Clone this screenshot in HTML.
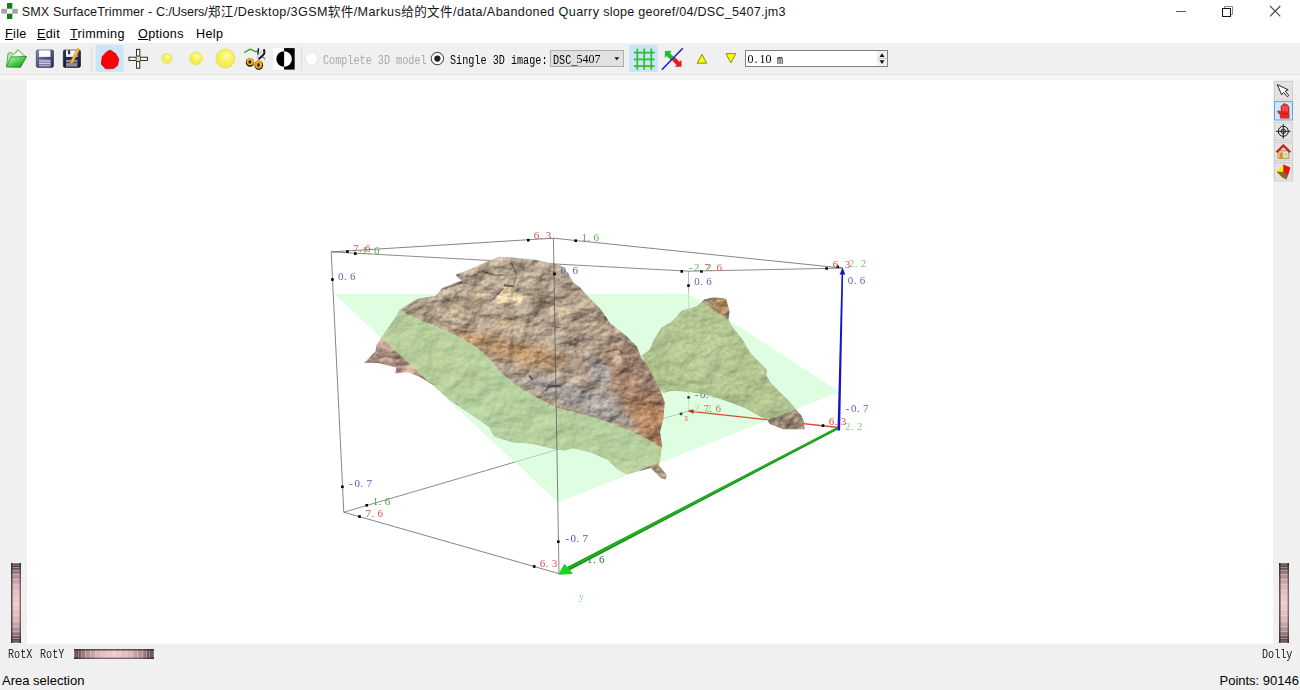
<!DOCTYPE html>
<html lang="en">
<head>
<meta charset="utf-8">
<title>SMX SurfaceTrimmer</title>
<style>
html,body{margin:0;padding:0;}
body{width:1300px;height:690px;overflow:hidden;background:#f0f0f0;position:relative;
  font-family:"Liberation Sans","Noto Sans CJK SC",sans-serif;color:#000;}
.abs{position:absolute;}
#titlebar{left:0;top:0;width:1300px;height:22px;background:#fff;}
#title{left:21.7px;top:4px;font-size:12.6px;line-height:16px;white-space:nowrap;color:#161616;letter-spacing:0.24px;}
#menubar{left:0;top:22px;width:1300px;height:21px;background:#fff;}
.mi{top:26px;font-size:12.6px;line-height:16px;white-space:nowrap;letter-spacing:.35px;}
.mi u{text-decoration:underline;text-underline-offset:1px;}
#toolbar{left:0;top:43px;width:1300px;height:31px;background:#f0f0f0;}
#tbline{left:0;top:74px;width:1300px;height:1px;background:#e3e3e3;}
#tbline2{left:0;top:75px;width:1300px;height:5px;background:#f6f6f6;}
#viewport{left:27px;top:80px;width:1246px;height:564px;background:#fff;}
.mono{font-family:"Liberation Mono","Noto Sans CJK SC",monospace;font-size:12.2px;line-height:14px;white-space:nowrap;transform:scaleX(.833);transform-origin:0 0;}
.sep{width:1px;height:24px;top:47px;background:#d0d0d0;}
.status{font-size:13px;line-height:16px;top:673px;white-space:nowrap;}
#scene{left:0;top:0;}
</style>
</head>
<body>
<div id="titlebar" class="abs"></div>
<div id="menubar" class="abs"></div>
<div id="toolbar" class="abs"></div>
<div id="tbline" class="abs"></div>
<div id="tbline2" class="abs"></div>
<div id="viewport" class="abs"></div>

<!-- title -->
<div id="title" class="abs"><span style="letter-spacing:.12px">SMX SurfaceTrimmer - </span><span style="letter-spacing:-.08px">C:/Users/</span><span style="letter-spacing:.5px">郑江</span><span style="letter-spacing:.38px">/Desktop/3GSM软件/Markus给的文件/data/Abandoned Quarry </span><span>slope georef/04/DSC_5407.jm3</span></div>

<!-- menu -->
<div class="abs mi" id="m1" style="left:5px"><u>F</u>ile</div>
<div class="abs mi" id="m2" style="left:37px"><u>E</u>dit</div>
<div class="abs mi" id="m3" style="left:70px"><u>T</u>rimming</div>
<div class="abs mi" id="m4" style="left:138px"><u>O</u>ptions</div>
<div class="abs mi" id="m5" style="left:196px">Help</div>

<!-- toolbar text -->
<div class="abs mono" id="t1" style="left:323.2px;top:53.7px;color:#a8a8a8">Complete 3D model</div>
<div class="abs mono" id="t2" style="left:449.6px;top:53.7px;color:#000">Single 3D image:</div>
<div class="abs" id="combo" style="left:550px;top:50px;width:72px;height:15px;background:#e1e1e1;border:1px solid #adadad;"></div>
<div class="abs mono" id="t3" style="left:552.5px;top:53.7px;color:#000">DSC_</div>
<div class="abs" id="spin" style="left:745px;top:50px;width:141px;height:15px;background:#fff;border:1px solid #808080;"></div>
<div class="abs mono" id="t4" style="left:777.3px;top:53.7px;color:#000">m</div>

<!-- bottom labels -->
<div class="abs mono" id="b1" style="left:7.6px;top:648.3px;color:#222">RotX</div>
<div class="abs mono" id="b3" style="left:40.3px;top:648.3px;color:#222">RotY</div>
<div class="abs mono" id="b2" style="left:1262px;top:648.3px;color:#222">Dolly</div>
<div class="abs status" id="s1" style="left:2px">Area selection</div>
<div class="abs status" id="s2" style="right:1px">Points: 90146</div>

<svg class="abs" id="scene" width="1300" height="690" viewBox="0 0 1300 690">
<defs>
<clipPath id="cpPlane"><polygon points="334.2,294.1 688.5,293.8 839.6,392.0 558.0,502.4"/></clipPath>
<clipPath id="cpR1"><polygon points="499.6,256.7 512.4,257.4 535.6,259.7 551.8,263.2 560.0,264.6 567.5,272.5 573.8,282.9 580.0,287.4 589.3,297.8 600.9,309.4 610.2,323.3 626.4,336.1 636.8,346.5 641.5,358.1 649.6,367.4 658.9,386.0 664.7,402.2 663.5,418.4 660.0,432.0 662.4,445.8 661.2,450.5 658.9,465.5 666.5,474.8 665.9,479.4 661.2,478.3 650.8,467.9 642.7,470.2 626.4,474.1 617.2,469.0 607.9,459.7 591.6,452.8 573.1,448.1 563.8,450.5 549.9,448.1 531.3,443.5 512.8,442.3 494.2,436.5 489.6,427.3 473.3,415.7 450.2,400.6 433.9,385.5 419.6,376.8 408.0,372.2 395.2,373.4 396.4,367.6 377.8,362.9 363.9,362.9 375.5,351.3 376.7,344.4 382.5,336.3 396.4,316.5 399.9,309.6 417.3,299.1 435.8,295.7 442.8,287.5 461.3,280.6 455.5,274.8 470.6,269.0 485.7,262.0"/></clipPath>
<clipPath id="cpR2"><polygon points="719.2,297.8 726.1,299.0 729.6,311.7 728.4,319.9 733.1,328.0 742.4,339.6 750.8,353.8 760.0,363.1 766.9,370.0 766.2,375.4 770.8,383.1 778.5,390.8 790.8,403.1 796.9,410.8 801.5,415.4 803.8,421.5 804.6,429.2 783.1,429.2 769.2,423.8 767.7,420.0 758.5,415.4 747.7,409.2 732.3,403.1 716.9,397.7 701.5,393.8 686.2,391.5 670.8,390.8 663.1,393.1 655.0,380.0 641.5,355.8 649.6,350.0 654.2,339.6 661.2,328.0 672.8,321.0 681.7,310.8 697.4,306.3 704.2,299.6 712.0,297.4"/></clipPath>
<clipPath id="cpR1up"><polygon points="399.9,310.7 417.3,318.5 440.0,328.0 458.0,336.2 472.0,344.0 485.8,354.8 494.0,364.0 502.0,373.3 512.0,381.5 522.9,389.5 539.1,398.8 557.6,408.1 585.4,415.0 608.6,422.0 631.8,431.3 650.3,440.5 661.9,447.5 700.0,448.0 700.0,230.0 340.0,230.0 340.0,310.0"/></clipPath>
<filter id="fBlur4" x="-20%" y="-20%" width="140%" height="140%"><feGaussianBlur stdDeviation="4"/></filter>
<filter id="fBlur2" x="-20%" y="-20%" width="140%" height="140%"><feGaussianBlur stdDeviation="2"/></filter>
<filter id="fBlur1" x="-20%" y="-20%" width="140%" height="140%"><feGaussianBlur stdDeviation=".9"/></filter>
<filter id="fBlurH" x="-20%" y="-20%" width="140%" height="140%"><feGaussianBlur stdDeviation=".7"/></filter>
<filter id="fNoise" x="0" y="0" width="100%" height="100%">
<feTurbulence type="fractalNoise" baseFrequency="0.28 0.34" numOctaves="3" seed="7" result="n"/>
<feColorMatrix in="n" type="matrix" values="0 0 0 0 0  0 0 0 0 0  0 0 0 0 0  1.6 0.9 0 0 -0.95" result="a"/>
<feFlood flood-color="#3a2c22"/><feComposite in2="a" operator="in"/>
</filter>
<filter id="fNoiseL" x="0" y="0" width="100%" height="100%">
<feTurbulence type="fractalNoise" baseFrequency="0.2 0.26" numOctaves="3" seed="23" result="n"/>
<feColorMatrix in="n" type="matrix" values="0 0 0 0 0  0 0 0 0 0  0 0 0 0 0  0.8 1.8 0 0 -1.05" result="a"/>
<feFlood flood-color="#e8d8bc"/><feComposite in2="a" operator="in"/>
</filter>
<filter id="fBump" filterUnits="userSpaceOnUse" x="350" y="245" width="330" height="245" color-interpolation-filters="sRGB">
<feTurbulence type="fractalNoise" baseFrequency="0.04 0.05" numOctaves="4" seed="11" result="t"/>
<feDiffuseLighting in="t" surfaceScale="3.6" diffuseConstant="1" lighting-color="#ffffff" result="l"><feDistantLight azimuth="235" elevation="52"/></feDiffuseLighting>
<feComposite in="SourceGraphic" in2="l" operator="arithmetic" k1="1.34" k2="0" k3="0" k4="0"/>
</filter>
<filter id="fBump2" filterUnits="userSpaceOnUse" x="630" y="290" width="190" height="150" color-interpolation-filters="sRGB">
<feTurbulence type="fractalNoise" baseFrequency="0.05 0.06" numOctaves="4" seed="5" result="t"/>
<feDiffuseLighting in="t" surfaceScale="3" diffuseConstant="1" lighting-color="#ffffff" result="l"><feDistantLight azimuth="235" elevation="55"/></feDiffuseLighting>
<feComposite in="SourceGraphic" in2="l" operator="arithmetic" k1="1.25" k2="0" k3="0" k4="0"/>
</filter>
</defs>
<g stroke="#5a5a5a" stroke-width=".7" fill="none">
<path d="M688.5 271.2L688.5 293.4" stroke="#9aa0a4"/>
<path d="M688.5 293.4L688.6 411.1" stroke="#a4aca4"/>
<path d="M343.8 512.2L688.6 411.1"/>
<path d="M331.2 251.9L688.5 271.2L842.6 268.1"/>
</g>
<polygon points="334.2,294.1 688.5,293.8 839.6,392.0 558.0,502.4" fill="rgb(202,252,203)" fill-opacity="0.6"/>
<path d="M688.6 411.1L838.8 427.5" stroke="#dc4a30" stroke-width="1.3" fill="none"/>
<path d="M687.6 411.1L693.6 409.5L693.6 413.70000000000005Z" fill="#c03020"/>
<text x="694.8 700 706 712" y="397.8" font-family="'Liberation Serif',serif" font-size="11px" fill="#5a6a9a">-0.7</text>
<g clip-path="url(#cpR2)"><g filter="url(#fBump2)">
<polygon points="719.2,297.8 726.1,299.0 729.6,311.7 728.4,319.9 733.1,328.0 742.4,339.6 750.8,353.8 760.0,363.1 766.9,370.0 766.2,375.4 770.8,383.1 778.5,390.8 790.8,403.1 796.9,410.8 801.5,415.4 803.8,421.5 804.6,429.2 783.1,429.2 769.2,423.8 767.7,420.0 758.5,415.4 747.7,409.2 732.3,403.1 716.9,397.7 701.5,393.8 686.2,391.5 670.8,390.8 663.1,393.1 655.0,380.0 641.5,355.8 649.6,350.0 654.2,339.6 661.2,328.0 672.8,321.0 681.7,310.8 697.4,306.3 704.2,299.6 712.0,297.4" fill="#9a947a"/>
<g filter="url(#fBlur4)">
<ellipse cx="722" cy="305" rx="11" ry="8" fill="#b07c4a"/>
<ellipse cx="700" cy="350" rx="35" ry="28" fill="#a8a086"/>
<ellipse cx="750" cy="385" rx="25" ry="14" fill="#989074" transform="rotate(40 750 385)"/>
<ellipse cx="790" cy="423" rx="16" ry="7" fill="#92786a"/>
<ellipse cx="665" cy="372" rx="12" ry="16" fill="#908a70"/>
</g>
<rect x="630" y="290" width="190" height="150" filter="url(#fNoise)" opacity=".25"/>
<rect x="630" y="290" width="190" height="150" filter="url(#fNoiseL)" opacity=".4"/>
</g></g>
<g clip-path="url(#cpR1)"><g filter="url(#fBump)">
<polygon points="499.6,256.7 512.4,257.4 535.6,259.7 551.8,263.2 560.0,264.6 567.5,272.5 573.8,282.9 580.0,287.4 589.3,297.8 600.9,309.4 610.2,323.3 626.4,336.1 636.8,346.5 641.5,358.1 649.6,367.4 658.9,386.0 664.7,402.2 663.5,418.4 660.0,432.0 662.4,445.8 661.2,450.5 658.9,465.5 666.5,474.8 665.9,479.4 661.2,478.3 650.8,467.9 642.7,470.2 626.4,474.1 617.2,469.0 607.9,459.7 591.6,452.8 573.1,448.1 563.8,450.5 549.9,448.1 531.3,443.5 512.8,442.3 494.2,436.5 489.6,427.3 473.3,415.7 450.2,400.6 433.9,385.5 419.6,376.8 408.0,372.2 395.2,373.4 396.4,367.6 377.8,362.9 363.9,362.9 375.5,351.3 376.7,344.4 382.5,336.3 396.4,316.5 399.9,309.6 417.3,299.1 435.8,295.7 442.8,287.5 461.3,280.6 455.5,274.8 470.6,269.0 485.7,262.0" fill="#a89888"/>
<g filter="url(#fBlur4)">
<polygon points="455,250 560,250 585,290 565,315 440,308 425,290" fill="#b0a392"/>
<polygon points="395,300 450,296 520,310 565,332 545,348 470,336 420,322" fill="#ae9d8a"/>
<polygon points="440,326 480,333 540,346 568,359 560,370 530,367 497,357 468,345" fill="#ae8a66"/>
<polygon points="560,272 600,305 640,345 668,400 650,420 600,400 572,360 558,320" fill="#a08e7e"/>
<polygon points="512,376 575,383 625,402 640,428 600,420 545,404" fill="#9c9896"/>
<polygon points="600,345 640,350 668,400 672,440 640,420 610,385" fill="#9c7c68"/>
<polygon points="618,402 655,392 674,425 668,470 645,442" fill="#a87c5a"/>
<polygon points="356,368 380,335 400,312 440,330 490,370 470,400 420,376" fill="#aa8c72"/>
<polygon points="355,370 376,334 400,356 426,382 400,380" fill="#b4968a"/>
<polygon points="470,390 520,385 600,420 660,450 668,482 600,470 520,450" fill="#a08e78"/>
<polygon points="575,296 602,310 614,345 590,340" fill="#ac9a88"/>
<polygon points="628,345 645,362 658,392 648,392 632,366" fill="#7e6a5e"/>
</g>
<g filter="url(#fBlur2)">
<ellipse cx="466" cy="304" rx="22" ry="9" fill="#92826f" transform="rotate(-12 466 304)"/>
<ellipse cx="540" cy="300" rx="12" ry="16" fill="#948472"/>
<ellipse cx="525" cy="268" rx="22" ry="6" fill="#9c8e7e"/>
<ellipse cx="600" cy="372" rx="10" ry="16" fill="#989492" transform="rotate(-30 600 372)"/>
<ellipse cx="560" cy="392" rx="22" ry="7" fill="#969292" transform="rotate(25 560 392)"/>
<ellipse cx="520" cy="352" rx="26" ry="5" fill="#b48a64" transform="rotate(14 520 352)"/>
</g>
<g filter="url(#fBlur1)">
<polygon points="503.9,286.9 513,287.6 523.4,298 519.5,304.5 493.5,302.6" fill="#e0cca4"/>
<polygon points="557.3,308 569,306 571.7,323 560,326" fill="#c6b296"/>
<polygon points="496,320 508,318.5 510.5,327 498,329" fill="#d0b48c"/>
<polygon points="487,271.5 503,272.6 502.6,276 489,275.4" fill="#c6b090"/>
<polygon points="464,271 486,264 496,270 474,280" fill="#b2a28e"/>
<polygon points="590,318 604,322 606,336 594,332" fill="#b8a48c"/>
<polygon points="470,290 486,286 490,298 476,301" fill="#b6a48c"/>
<polygon points="448,305 462,301 466,311 452,314" fill="#b8a68a"/>
<polygon points="612,352 622,356 620,366 611,362" fill="#b8a690"/>
</g>
<g fill="none" stroke-linecap="round" filter="url(#fBlurH)" opacity=".62">
<path d="M483 271.6L494 274.8L502.6 275" stroke="#4a3e34" stroke-width="1.7"/>
<path d="M505 285.4L513.4 286.4" stroke="#2e2620" stroke-width="2.3"/>
<path d="M513.5 285L516.9 274.6L511 262.8" stroke="#5a4c40" stroke-width="1.6"/>
<path d="M503 288.5L497 295L490.8 300.8" stroke="#4c4036" stroke-width="1.8"/>
<path d="M441 289.5L452 286L462 282.5" stroke="#3c3028" stroke-width="1.8"/>
<path d="M545.5 390.5L549 387L554 386L560 386.4" stroke="#241c18" stroke-width="2.2"/>
<path d="M529.5 376L532.5 379.5" stroke="#2c241e" stroke-width="2.1"/>
<path d="M552 326.5L560 327.5" stroke="#5c4c40" stroke-width="1.7"/>
<path d="M606 352L618 349L624 354" stroke="#4a3a32" stroke-width="1.6"/>
<path d="M463 262.5L470 268" stroke="#54463a" stroke-width="1.7"/>
</g>
<rect x="355" y="250" width="320" height="235" filter="url(#fNoise)" opacity=".16"/>
<rect x="355" y="250" width="320" height="235" filter="url(#fNoiseL)" opacity=".3"/>
</g></g>
<g clip-path="url(#cpPlane)">
<polygon points="719.2,297.8 726.1,299.0 729.6,311.7 728.4,319.9 733.1,328.0 742.4,339.6 750.8,353.8 760.0,363.1 766.9,370.0 766.2,375.4 770.8,383.1 778.5,390.8 790.8,403.1 796.9,410.8 801.5,415.4 803.8,421.5 804.6,429.2 783.1,429.2 769.2,423.8 767.7,420.0 758.5,415.4 747.7,409.2 732.3,403.1 716.9,397.7 701.5,393.8 686.2,391.5 670.8,390.8 663.1,393.1 655.0,380.0 641.5,355.8 649.6,350.0 654.2,339.6 661.2,328.0 672.8,321.0 681.7,310.8 697.4,306.3 704.2,299.6 712.0,297.4" fill="rgb(192,232,160)" fill-opacity=".56"/>
</g>
<g clip-path="url(#cpR1)"><g clip-path="url(#cpPlane)">
<polygon points="399.9,310.7 417.3,318.5 440.0,328.0 458.0,336.2 472.0,344.0 485.8,354.8 494.0,364.0 502.0,373.3 512.0,381.5 522.9,389.5 539.1,398.8 557.6,408.1 585.4,415.0 608.6,422.0 631.8,431.3 650.3,440.5 661.9,447.5 700.0,448.0 700.0,520.0 340.0,520.0 340.0,310.0" fill="rgb(186,236,172)" fill-opacity=".66"/>
</g></g>
<g stroke="#505050" stroke-width=".7" fill="none">
<path d="M343.8 512.2L331.2 251.9L553.4 238.2L842.6 268.1"/>
<path d="M553.4 238.2L559 573.6L343.8 512.2"/>
</g>
<g fill="#000"><rect x="346.1" y="250.3" width="2.6" height="2.6"/><rect x="354.0" y="252.3" width="2.6" height="2.6"/><rect x="331.1" y="278.2" width="2.6" height="2.6"/><rect x="527.0" y="238.9" width="2.6" height="2.6"/><rect x="574.4" y="239.4" width="2.6" height="2.6"/><rect x="553.1" y="272.6" width="2.6" height="2.6"/><rect x="680.4" y="270.1" width="2.6" height="2.6"/><rect x="700.1" y="270.1" width="2.6" height="2.6"/><rect x="687.2" y="284.3" width="2.6" height="2.6"/><rect x="825.3" y="267.2" width="2.6" height="2.6"/><rect x="836.4" y="265.5" width="2.6" height="2.6"/><rect x="341.1" y="485.5" width="2.6" height="2.6"/><rect x="365.5" y="504.0" width="2.6" height="2.6"/><rect x="358.2" y="515.2" width="2.6" height="2.6"/><rect x="557.0" y="540.4" width="2.6" height="2.6"/><rect x="532.9" y="565.2" width="2.6" height="2.6"/><rect x="821.7" y="424.3" width="2.6" height="2.6"/></g>
<g fill="#2a4a34"><rect x="687.2" y="396" width="2.8" height="2.8" rx="1"/><rect x="679.6" y="412.4" width="2.8" height="2.8" rx="1"/></g>
<g font-family="'Liberation Serif',serif" font-size="11px">
<text x="362.0 368.0 374.0" y="253.9" fill="#50ac50">1.6</text>
<text x="581.5 587.5 593.5" y="240.7" fill="#50ac50">1.6</text>
<text x="688.8 694.0 700.0 706.0" y="270.9" fill="#58b060">-2.2</text>
<text x="848.7 854.7 860.7" y="267.3" fill="#78c878">2.2</text>
<text x="845.0 851.0 857.0" y="429.8" fill="#8cc88c">2.2</text>
<text x="688.8 694.0 700.0 706.0" y="412.2" fill="#a6d6a6">-2.2</text>
<text x="372.7 378.7 384.7" y="504.5" fill="#44a844">1.6</text>
<text x="587.0 593.0 599.0" y="562.5" fill="#2a7a2a">1.6</text>
<text x="579.0" y="599.5" fill="#88da88" font-size="9.5px">y</text>
<text x="353.0 359.0 365.0" y="252" fill="#d65050">7.6</text>
<text x="533.8 539.8 545.8" y="239.2" fill="#d04c4c">6.3</text>
<text x="704.5 710.5 716.5" y="270.9" fill="#d86060">7.6</text>
<text x="832.7 838.7 844.7" y="268.3" fill="#dc4848">6.3</text>
<text x="828.7 834.7 840.7" y="425" fill="#dc4848">6.3</text>
<text x="703.6 709.6 715.6" y="412.2" fill="#a88850">7.6</text>
<text x="365.6 371.6 377.6" y="516.7" fill="#d05050">7.6</text>
<text x="539.8 545.8 551.8" y="566.5" fill="#d05050">6.3</text>
<text x="684.0" y="421" fill="#d88060" font-size="9.5px">x</text>
<text x="338.0 344.0 350.0" y="279.5" fill="#6060c0">0.6</text>
<text x="560.5 566.5 572.5" y="273.7" fill="#5858b4">0.6</text>
<text x="694.3 700.3 706.3" y="285.4" fill="#6060c0">0.6</text>
<text x="847.7 853.7 859.7" y="283.5" fill="#6060c0">0.6</text>
<text x="845.8 851.0 857.0 863.0" y="411.8" fill="#6464bc">-0.7</text>
<text x="349.3 354.5 360.5 366.5" y="486.8" fill="#5858b0">-0.7</text>
<text x="565.4 570.6 576.6 582.6" y="541.7" fill="#5050a8">-0.7</text>
</g>
<polygon points="568.9,570.7 840.4,428.2 839.2,426.0 567.1,567.1" fill="#159615"/>
<polygon points="568.3,569.1 840.0,427.1 839.6,426.3 567.7,567.9" fill="#2cb82c"/>
<path d="M559.6 574L564.6 565L571.6 573.2Z" fill="#22d022" stroke="#22d022" stroke-width="1.6" stroke-linejoin="round"/>
<polygon points="841.6,272.0 837.5,430.5 840.1,430.5 843.2,272.0" fill="#1414c8"/>
<path d="M842.6 267.4L845.3 274.6L839.6 274.6Z" fill="#1414c8"/>
</svg>
<svg class="abs" id="icons" style="left:0;top:0" width="1300" height="690" viewBox="0 0 1300 690">
<defs>
<linearGradient id="gFold" x1="0" y1="0" x2="1" y2="1"><stop offset="0" stop-color="#d8f8d0"/><stop offset=".55" stop-color="#48c848"/><stop offset="1" stop-color="#109010"/></linearGradient>
<linearGradient id="gDisk" x1="0" y1="0" x2="1" y2="1"><stop offset="0" stop-color="#8a90b2"/><stop offset=".5" stop-color="#4c5180"/><stop offset="1" stop-color="#2a2d50"/></linearGradient>
<linearGradient id="gDisk2" x1="0" y1="0" x2="0" y2="1"><stop offset="0" stop-color="#30345a"/><stop offset="1" stop-color="#15162c"/></linearGradient>
<linearGradient id="gMetal" x1="0" y1="0" x2="0" y2="1"><stop offset="0" stop-color="#9a9cb8"/><stop offset=".5" stop-color="#d8d8e4"/><stop offset="1" stop-color="#8c8ea8"/></linearGradient>
<radialGradient id="gY" cx=".58" cy=".36" r=".75"><stop offset="0" stop-color="#ffffc8"/><stop offset=".3" stop-color="#f8f466"/><stop offset="1" stop-color="#eee848"/></radialGradient>
<linearGradient id="gWheelV" x1="0" y1="0" x2="0" y2="1"><stop offset="0" stop-color="#2c2224"/><stop offset=".05" stop-color="#5c484a"/><stop offset=".14" stop-color="#a68a8e"/><stop offset=".3" stop-color="#dcb8bc"/><stop offset=".5" stop-color="#f0cccf"/><stop offset=".7" stop-color="#dcb8bc"/><stop offset=".86" stop-color="#a68a8e"/><stop offset=".95" stop-color="#5c484a"/><stop offset="1" stop-color="#2c2224"/></linearGradient>
<linearGradient id="gWheelH" x1="0" y1="0" x2="1" y2="0"><stop offset="0" stop-color="#2c2224"/><stop offset=".05" stop-color="#5c484a"/><stop offset=".14" stop-color="#a68a8e"/><stop offset=".3" stop-color="#dcb8bc"/><stop offset=".5" stop-color="#f0cccf"/><stop offset=".7" stop-color="#dcb8bc"/><stop offset=".86" stop-color="#a68a8e"/><stop offset=".95" stop-color="#5c484a"/><stop offset="1" stop-color="#2c2224"/></linearGradient>
</defs>
<rect x="7" y="3" width="5.3" height="16" fill="#138013"/>
<rect x="1.2" y="8.8" width="16.6" height="4.8" fill="#a4a4a4"/>
<rect x="7" y="8.8" width="5.3" height="4.8" fill="#fff"/>
<path d="M1176 11.5H1186" stroke="#555" stroke-width="1" fill="none"/>
<path d="M1224.5 8.5V6.5H1232.5V14.5H1230.5" stroke="#888" stroke-width="1" fill="none"/>
<rect x="1222.5" y="8.5" width="8" height="8" stroke="#111" stroke-width="1" fill="#fff"/>
<path d="M1270 6L1280.3 16.3M1280.3 6L1270 16.3" stroke="#444" stroke-width="1.1" fill="none"/>
<rect x="91" y="47" width="1" height="24" fill="#dadada"/>
<rect x="301" y="47" width="1" height="24" fill="#dadada"/>
<path d="M6.5 66.5L8 53.5L11 52.5L13.5 54.5L18 49.5L24 55.5L26.3 57L20.5 67Z" fill="#b8eab0" stroke="#3c9a3c" stroke-width=".8"/>
<path d="M12 56L18.5 50.5L23.5 55.5L16 59Z" fill="#f4fff0" stroke="#78b878" stroke-width=".6"/>
<path d="M6.3 67L11 57L26.5 56.5L20.5 67.2Z" fill="url(#gFold)" stroke="#1f8a1f" stroke-width=".8"/>
<rect x="36.3" y="50" width="17.2" height="17.4" rx="1.6" fill="url(#gDisk)" stroke="#2a2c48" stroke-width=".6"/>
<rect x="39" y="50.3" width="11.5" height="6.6" fill="#fafaff"/>
<rect x="39" y="59.5" width="11.5" height="7.2" fill="url(#gMetal)"/>
<rect x="39" y="61.8" width="11.5" height="1" fill="#7c7e9c"/><rect x="39" y="64" width="11.5" height="1" fill="#7c7e9c"/>
<rect x="63.3" y="50" width="17.2" height="17.4" rx="1.6" fill="url(#gDisk2)" stroke="#101020" stroke-width=".6"/>
<rect x="66" y="50.3" width="11.5" height="6.6" fill="#f4f4fc"/>
<rect x="68" y="50.3" width="2.2" height="4" fill="#30345a"/>
<rect x="66" y="59.8" width="11.5" height="6.8" fill="#8c8ea8"/>
<rect x="66" y="62" width="11.5" height="1.2" fill="#4c4e6c"/>
<path d="M77.6 48.2L79.8 49.6L72.3 63.6L69.8 64.6L70.1 62Z" fill="#f0a020" stroke="#c87808" stroke-width=".5"/>
<path d="M78.2 48.6L72 62.5" stroke="#ffd070" stroke-width=".9"/>
<rect x="95.5" y="45" width="28.2" height="26.8" fill="#cce4f7"/>
<path d="M110 50L115.5 53.5L118.8 59L117.5 65.5L113.5 68.6L105.5 68.8L101.3 64L102.3 56.5L106 52.5Z" fill="#ff0000" stroke="#d80000" stroke-width=".8"/>
<g fill="#fff" stroke="#111" stroke-width=".9"><rect x="129" y="57.2" width="7.2" height="3.2"/><rect x="140.2" y="57.2" width="7.2" height="3.2"/><rect x="136.6" y="49.3" width="3.2" height="6.8"/><rect x="136.6" y="61.4" width="3.2" height="6.8"/></g>
<rect x="136.8" y="57" width="3" height="3.6" fill="#e8e8a0"/>
<circle cx="166.8" cy="58.4" r="5" fill="url(#gY)" stroke="#e6e050" stroke-width=".9"/>
<circle cx="196" cy="58.4" r="6.3" fill="url(#gY)" stroke="#e6e050" stroke-width=".9"/>
<circle cx="225.4" cy="58.5" r="9.4" fill="url(#gY)" stroke="#e4dc50" stroke-width=".9"/>
<path d="M244.2 52.6L250.2 49.1L253.4 50.6L255.7 51.7L258 50.8" stroke="#34a434" stroke-width="1.3" fill="none" stroke-linejoin="round"/>
<path d="M258.5 48.2L257.9 54.8" stroke="#15151c" stroke-width="1.4" fill="none"/>
<path d="M261.9 50.4L256.6 58" stroke="#c4cce4" stroke-width="1.5" fill="none"/>
<path d="M264 49.2L264.4 53.2Q263 56 258.4 59.2" stroke="#1a1a22" stroke-width="2" fill="none"/>
<path d="M262.6 56.6L265.2 59.4" stroke="#38a038" stroke-width="1.2" fill="none"/>
<ellipse cx="250" cy="62.3" rx="4.2" ry="4.4" fill="#2a1606"/>
<ellipse cx="250.3" cy="61.6" rx="3.7" ry="3.7" fill="#eab424"/>
<ellipse cx="249.9" cy="61.9" rx="1.5" ry="1.7" fill="#3a1c06" transform="rotate(-30 249.9 61.9)"/>
<ellipse cx="258.8" cy="65.2" rx="4.3" ry="4.8" fill="#2a1606"/>
<ellipse cx="258.6" cy="64.6" rx="3.6" ry="4.1" fill="#e8ac20"/>
<ellipse cx="258.4" cy="65" rx="1.3" ry="1.9" fill="#3a1c06"/>
<rect x="273.2" y="47.9" width="22" height="22" fill="#fff"/>
<rect x="284.1" y="48.1" width="10.6" height="21.5" fill="#000"/>
<path d="M284.1 51.2A7.8 7.8 0 0 0 284.1 66.8Z" fill="#000"/>
<path d="M284.1 51.2A7.8 7.8 0 0 1 284.1 66.8Z" fill="#fff"/>
<circle cx="311.4" cy="58.6" r="6.2" fill="#fff" stroke="#e2e2e2" stroke-width="1"/>
<circle cx="437.4" cy="58.6" r="6.2" fill="#fff" stroke="#333" stroke-width="1"/>
<circle cx="437.4" cy="58.6" r="3.1" fill="#222"/>
<path d="M614.3 57.3H619.3L616.8 60.2Z" fill="#111"/>
<rect x="629" y="45" width="28.8" height="27" fill="#cce4f7"/>
<path d="M637.3 48.5V69.8M644.2 48.5V69.8M651.3 48.5V69.8M634 52.6H654.6M634 59.4H654.6M634 66.2H654.6" stroke="#2fc02f" stroke-width="1.7" fill="none"/>
<path d="M665.2 51.2L671.2 51.2L669.6 52.9L674 57.5L671.3 60.2L666.8 55.7L665.2 57.4Z" fill="#18c030" stroke="#0a9020" stroke-width=".4"/>
<path d="M681.2 66.6L675.2 66.6L676.8 64.9L672.3 60.3L675 57.6L679.5 62.1L681.2 60.4Z" fill="#f01818" stroke="#c00808" stroke-width=".4"/>
<path d="M661.8 69.8L682.8 48.2" stroke="#1818d8" stroke-width="1.5" fill="none"/>
<path d="M701.9 54.3L706.6 63.2H697.2Z" fill="#ffff00" stroke="#8a8a10" stroke-width="1"/>
<path d="M730.9 62.8L726 53.7H735.8Z" fill="#ffff00" stroke="#8a8a10" stroke-width="1"/>
<rect x="877" y="51" width="10" height="15" fill="#f0f0f0"/>
<path d="M879.5 57L882 53.2L884.5 57Z" fill="#111"/><path d="M879.5 60.2L882 64L884.5 60.2Z" fill="#111"/>
<path d="M877.5 58.5H886.5" stroke="#c8c8c8" stroke-width="1"/>
<g font-family="'Liberation Serif',serif" font-size="12px" fill="#000"><text x="576.5 582.5 588.5 594.5" y="63">5407</text><text x="747.5 754.5 759.5 765.5" y="63">0.10</text></g>
<rect x="1274.5" y="81.5" width="18" height="18.4" fill="#e3e3e3" stroke="#cdcdcd" stroke-width="1"/>
<rect x="1274.5" y="101.60000000000001" width="18" height="18.4" fill="#cce8ff" stroke="#62a4dc" stroke-width="1"/>
<rect x="1274.5" y="122.2" width="18" height="18.4" fill="#e3e3e3" stroke="#cdcdcd" stroke-width="1"/>
<rect x="1274.5" y="142.39999999999998" width="18" height="18.4" fill="#e3e3e3" stroke="#cdcdcd" stroke-width="1"/>
<rect x="1274.5" y="162.5" width="18" height="18.4" fill="#e3e3e3" stroke="#cdcdcd" stroke-width="1"/>
<path d="M1277.3 84.6L1288.2 89.8L1285.2 91.2L1288.8 95.6L1287.3 96.8L1283.6 92.4L1281.6 94.8Z" fill="#fff" stroke="#111" stroke-width=".9" stroke-linejoin="round"/>
<path d="M1280.5 118.2L1280 114.5L1277.2 111.8L1278.5 110.5L1281 112L1281 106L1282.6 105.2L1283.2 104L1284.8 103.6L1286 104.4L1287.4 104.6L1288 106L1289 106.8L1289.2 118.2Z" fill="#e42828" stroke="#b81010" stroke-width=".5"/>
<path d="M1283 106V111M1285 105.5V111M1287 106.5V111.5" stroke="#ff7a7a" stroke-width=".9"/>
<path d="M1283.2 113.6H1284.4M1286 113.6H1287.2" stroke="#700" stroke-width=".9"/>
<circle cx="1283.3" cy="131.3" r="5" fill="none" stroke="#111" stroke-width="1"/><circle cx="1283.3" cy="131.3" r="2.2" fill="none" stroke="#111" stroke-width=".9"/>
<path d="M1283.3 124V138.6M1276 131.3H1290.6" stroke="#111" stroke-width=".9"/>
<path d="M1278 150.5H1288.8V158.6H1278Z" fill="#f0c878" stroke="#a07828" stroke-width=".6"/>
<path d="M1276 151.6L1283.4 144.2L1290.8 151.6L1289.4 152.6L1283.4 147L1277.4 152.6Z" fill="#e01818" stroke="#a80808" stroke-width=".5"/>
<rect x="1279.8" y="152.8" width="2.8" height="5.8" fill="#c89038"/>
<rect x="1284.2" y="152.4" width="3.4" height="4" fill="#9ad0f0" stroke="#fff" stroke-width=".5"/>
<path d="M1276.3 171.4L1283.6 164.6L1283.6 178.6Z" fill="#ffee00"/>
<path d="M1283.6 164.6L1290.4 167.6L1288.2 175L1283.6 172Z" fill="#f01010"/>
<path d="M1276.3 171.4L1283.6 172L1288.2 175L1286.4 179.4L1282.4 177.6Z" fill="#8a6820"/>
<path d="M1283.6 164.6V172L1288.2 175" stroke="#502000" stroke-width=".4" fill="none"/>
<rect x="11" y="563" width="10" height="80" fill="url(#gWheelV)"/>
<rect x="11" y="563" width="1.6" height="80" fill="#3a2c2e" opacity=".75"/><rect x="19.6" y="563" width="1.4" height="80" fill="#3a2c2e" opacity=".6"/>
<rect x="1279" y="563" width="10" height="80" fill="url(#gWheelV)"/>
<rect x="1279" y="563" width="1.6" height="80" fill="#3a2c2e" opacity=".75"/><rect x="1287.6" y="563" width="1.4" height="80" fill="#3a2c2e" opacity=".6"/>
<rect x="74" y="649" width="80" height="10" fill="url(#gWheelH)"/>
<rect x="74" y="649" width="80" height="1.6" fill="#3a2c2e" opacity=".75"/><rect x="74" y="657.6" width="80" height="1.4" fill="#3a2c2e" opacity=".6"/>
<path d="M12.5 563.5H19.5M12.5 565.0H19.5M12.5 567.4H19.5M12.5 570.6H19.5M12.5 574.7H19.5M12.5 579.5H19.5M12.5 584.8H19.5M12.5 590.6H19.5M12.5 596.7H19.5M12.5 603.0H19.5M12.5 609.3H19.5M12.5 615.4H19.5M12.5 621.2H19.5M12.5 626.5H19.5M12.5 631.3H19.5M12.5 635.4H19.5M12.5 638.6H19.5M12.5 641.0H19.5M12.5 642.5H19.5M1280.5 563.5H1287.5M1280.5 565.0H1287.5M1280.5 567.4H1287.5M1280.5 570.6H1287.5M1280.5 574.7H1287.5M1280.5 579.5H1287.5M1280.5 584.8H1287.5M1280.5 590.6H1287.5M1280.5 596.7H1287.5M1280.5 603.0H1287.5M1280.5 609.3H1287.5M1280.5 615.4H1287.5M1280.5 621.2H1287.5M1280.5 626.5H1287.5M1280.5 631.3H1287.5M1280.5 635.4H1287.5M1280.5 638.6H1287.5M1280.5 641.0H1287.5M1280.5 642.5H1287.5M74.5 650.5V657.5M76.0 650.5V657.5M78.4 650.5V657.5M81.6 650.5V657.5M85.7 650.5V657.5M90.5 650.5V657.5M95.8 650.5V657.5M101.6 650.5V657.5M107.7 650.5V657.5M114.0 650.5V657.5M120.3 650.5V657.5M126.4 650.5V657.5M132.2 650.5V657.5M137.5 650.5V657.5M142.3 650.5V657.5M146.4 650.5V657.5M149.6 650.5V657.5M152.0 650.5V657.5M153.5 650.5V657.5" stroke="#f8dcde" stroke-width=".7" opacity=".7"/>
</svg>
</body>
</html>
